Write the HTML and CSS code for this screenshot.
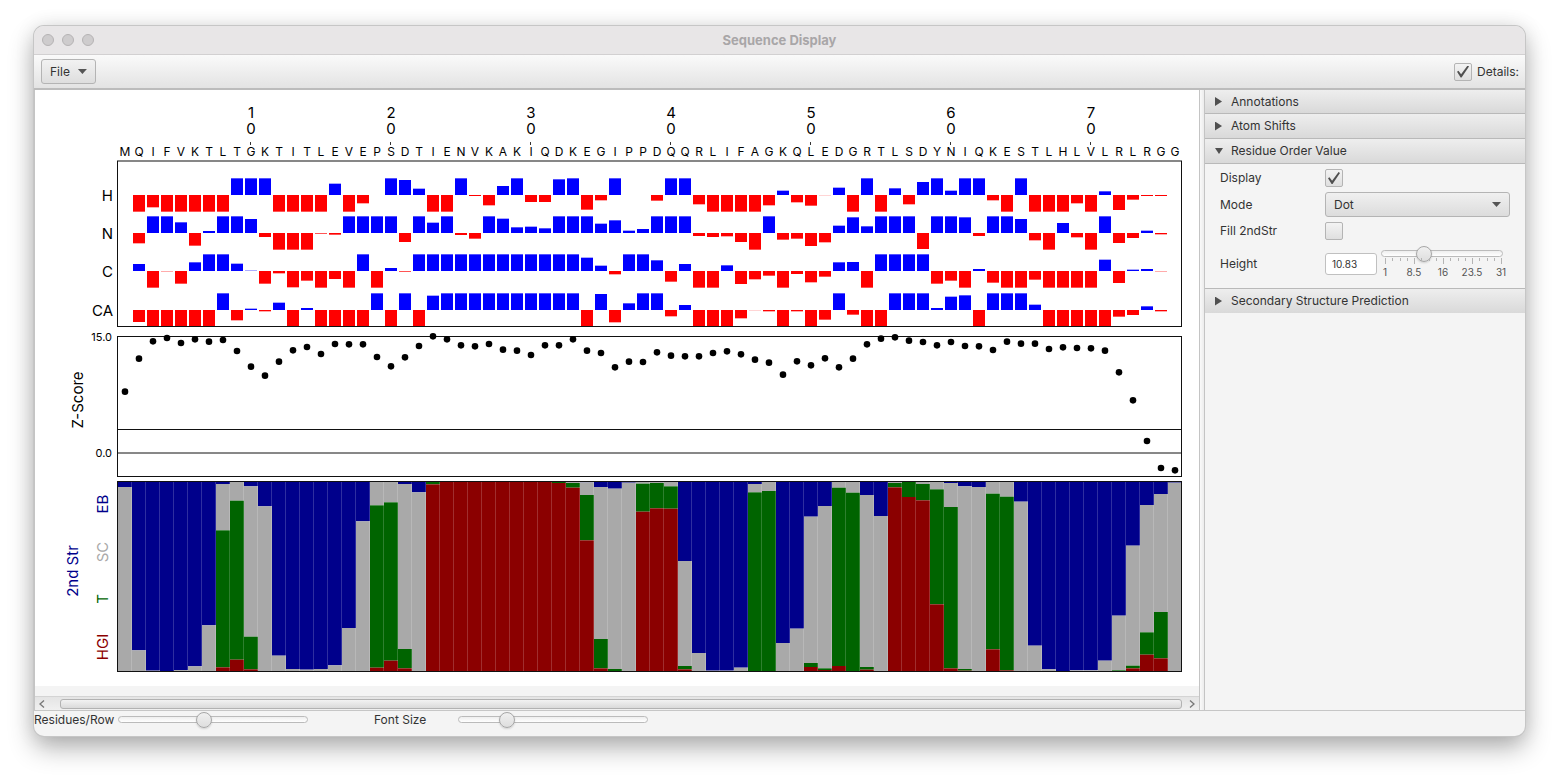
FILE: index.html
```html
<!DOCTYPE html>
<html lang="en">
<head>
<meta charset="utf-8">
<title>Sequence Display</title>
<link rel="stylesheet" href="styles.css">
</head>
<body>
<main class="window">
  <header class="titlebar">
    <div class="lights"><span class="light"></span><span class="light"></span><span class="light"></span></div>
    <h1 class="title">Sequence Display</h1>
  </header>
  <div class="toolbar">
    <button class="menu-button" type="button">File <span class="arrow-down"></span></button>
    <label class="details"><input class="check" type="checkbox" checked>Details:</label>
  </div>
  <div class="body">
    <section class="canvas-pane">
      <div class="viewport"><svg id="chart" class="chart" width="1160" height="596" role="img" aria-label="Sequence chart"></svg></div>
      <div class="scrollbar">
        <button class="scroll-button" type="button" aria-label="Scroll left"><svg width="8" height="10" viewBox="0 0 8 10"><path d="M6 1.500 2 5l4 3.500"/></svg></button>
        <div class="scroll-thumb"></div>
        <button class="scroll-button" type="button" aria-label="Scroll right"><svg width="8" height="10" viewBox="0 0 8 10"><path d="M2 1.500 6 5 2 8.500"/></svg></button>
      </div>
    </section>
    <div class="divider"></div>
    <aside class="side">
      <button class="pane-head" type="button"><span class="arrow-right"></span>Annotations</button>
      <button class="pane-head" type="button"><span class="arrow-right"></span>Atom Shifts</button>
      <button class="pane-head" type="button"><span class="arrow-open"></span>Residue Order Value</button>
      <div class="pane-body">
        <label for="display">Display</label>
        <input class="check" id="display" type="checkbox" checked>
        <label for="mode">Mode</label>
        <div class="combo">
          <select class="combo-select" id="mode"><option>Dot</option></select>
          <span class="arrow-down"></span>
        </div>
        <label for="fill">Fill 2ndStr</label>
        <input class="check" id="fill" type="checkbox">
        <label for="height">Height</label>
        <div class="height-row">
          <input class="field" id="height" type="text" value="10.83">
          <div class="scale">
            <input class="slider" type="range" min="1" max="31" step="any" value="10.83" aria-label="Height">
            <svg id="ticks" class="ticks" width="130" height="22"></svg>
          </div>
        </div>
      </div>
      <button class="pane-head" type="button"><span class="arrow-right"></span>Secondary Structure Prediction</button>
    </aside>
  </div>
  <footer class="footer">
    <label class="footer-label" for="perrow">Residues/Row</label>
    <input class="slider footer-slider" id="perrow" type="range" min="0" max="1000" value="447">
    <label class="footer-label second" for="fontsize">Font Size</label>
    <input class="slider footer-slider" id="fontsize" type="range" min="0" max="1000" value="232">
  </footer>
</main>
<script src="chart.js"></script>
</body>
</html>
```
FILE: styles.css
```css
* {
  box-sizing: border-box;
}

body {
  margin: 0;
  background: #fff;
  color: #333;
  font: 12px/16px Inter, "Liberation Sans", sans-serif;
}

button,
input,
select {
  margin: 0;
  color: inherit;
  font: inherit;
}

.window {
  display: flex;
  flex-direction: column;
  min-height: calc(100vh - 68px);
  margin: 26px 34px 42px;
  overflow: hidden;
  border-radius: 10px;
  background: #f4f4f4;
  box-shadow: 0 0 0 1px #c6c6c6, 0 12px 26px rgba(0, 0, 0, 0.3), 0 0 20px rgba(0, 0, 0, 0.1);
}

.titlebar {
  display: grid;
  grid-template-columns: 1fr auto 1fr;
  align-items: center;
  height: 29px;
  padding: 0 8px;
  border-bottom: 1px solid #d2d0d1;
  background: #e8e6e7;
}

.lights {
  display: flex;
  gap: 8px;
}

.light {
  width: 12px;
  height: 12px;
  border: 1px solid #b5b3b4;
  border-radius: 50%;
  background: #cecccd;
}

.title {
  margin: 0;
  color: #a9a6a8;
  font-size: 13px;
  font-weight: 700;
  line-height: 16px;
}

.toolbar {
  display: flex;
  align-items: center;
  justify-content: space-between;
  height: 35px;
  padding: 0 6px 0 7px;
  border-bottom: 2px solid #bcbcbc;
  background: linear-gradient(#fafafa, #e3e3e3);
}

.menu-button {
  display: flex;
  align-items: center;
  gap: 8px;
  height: 25px;
  padding: 0 8px;
  border: 1px solid #b4b4b4;
  border-radius: 3px;
  background: linear-gradient(#f2f2f2, #dedede);
}

.arrow-down {
  width: 9px;
  height: 5px;
  background: #555;
  clip-path: polygon(0 0, 100% 0, 50% 100%);
}

.details {
  display: flex;
  align-items: center;
  gap: 5px;
}

.check {
  display: grid;
  place-items: center;
  width: 18px;
  height: 18px;
  appearance: none;
  border: 1px solid #b4b4b4;
  border-radius: 2px;
  background: linear-gradient(#f3f3f3, #dfdfdf);
}

.check:checked::before {
  width: 12px;
  height: 12px;
  background: #505050;
  clip-path: polygon(0 52%, 12% 44%, 34% 72%, 88% 0, 100% 8%, 38% 100%, 30% 100%);
  content: "";
}

.body {
  display: flex;
  flex: 1;
  border-bottom: 1px solid #c6c6c6;
}

.canvas-pane {
  display: flex;
  flex: 1;
  flex-direction: column;
  min-width: 0;
  border-right: 1px solid #c4c4c4;
  border-left: 1px solid #c4c4c4;
}

.viewport {
  overflow: hidden;
  background: #fff;
}

.chart {
  display: block;
}

.letter {
  font-size: 12px;
}

.axis {
  font-size: 11px;
}

.number,
.atom,
.side-label,
.class-label {
  font-size: 15px;
}

.frame {
  fill: none;
  stroke: #111;
}

.scrollbar {
  display: flex;
  align-items: center;
  height: 14px;
  margin-top: auto;
  border-top: 1px solid #d4d4d4;
  background: linear-gradient(#e4e4e4, #f0f0f0);
}

.scroll-button {
  display: grid;
  flex: none;
  place-items: center;
  width: 14px;
  height: 12px;
  padding: 0;
  border: 0;
  background: none;
}

.scroll-button:first-child {
  margin-right: 11px;
}

.scroll-button path {
  fill: none;
  stroke: #777;
  stroke-width: 1.3;
}

.scroll-thumb {
  flex: 1;
  height: 10px;
  margin-right: 3px;
  border: 1px solid #b2b2b2;
  border-radius: 3px;
  background: linear-gradient(#f2f2f2, #dadada);
}

.divider {
  width: 5px;
  border-right: 1px solid #c4c4c4;
  background: linear-gradient(90deg, #fafafa, #ececec);
}

.side {
  flex: none;
  width: 320px;
}

.pane-head {
  display: flex;
  align-items: center;
  gap: 8px;
  width: 100%;
  height: 25px;
  padding: 0 10px;
  border: 0;
  border-bottom: 1px solid #b9b9b9;
  background: linear-gradient(#eee, #d9d9d9);
  text-align: left;
}

.pane-head:first-child {
  height: 24px;
}

.pane-head:last-child {
  border-top: 1px solid #b9b9b9;
  border-bottom: 0;
}

.arrow-right,
.arrow-open {
  width: 8px;
  height: 9px;
  background: #505050;
  clip-path: polygon(0 0, 88% 50%, 0 100%);
}

.arrow-open {
  height: 6px;
  clip-path: polygon(0 0, 100% 0, 50% 100%);
}

.pane-body {
  display: grid;
  grid-template-columns: 100px 1fr;
  align-items: center;
  gap: 5px;
  padding: 5px 15px;
}

.combo {
  display: grid;
  align-items: center;
}

.combo > * {
  grid-area: 1 / 1;
}

.combo-select {
  height: 25px;
  padding: 0 8px;
  appearance: none;
  border: 1px solid #b4b4b4;
  border-radius: 3px;
  background: linear-gradient(#f0f0f0, #dcdcdc);
}

.combo .arrow-down {
  justify-self: end;
  margin-right: 9px;
  pointer-events: none;
}

.height-row {
  display: flex;
  gap: 4px;
  align-items: center;
  height: 38px;
}

.field {
  flex: none;
  width: 52px;
  height: 22px;
  padding: 0 6px;
  border: 1px solid #c0c0c0;
  border-radius: 3px;
  background: #fff;
  font-size: 10px;
}

.scale {
  display: flex;
  flex-direction: column;
  width: 122px;
  height: 38px;
}

.slider {
  flex: none;
  width: 100%;
  height: 16px;
  appearance: none;
  background: none;
}

.slider::-webkit-slider-runnable-track {
  height: 7px;
  border: 1px solid #bbb;
  border-radius: 4px;
  background: linear-gradient(#eee, #fff);
}

.slider::-webkit-slider-thumb {
  width: 16px;
  height: 16px;
  margin-top: -5px;
  appearance: none;
  border: 1px solid #a6a6a6;
  border-radius: 50%;
  background: linear-gradient(#f0f0f0, #dedede);
  box-shadow: 0 1px 2px rgba(0, 0, 0, 0.15);
}

.ticks {
  overflow: visible;
  fill: #555;
  font-size: 10px;
}

.footer {
  display: flex;
  height: 25px;
}

.footer-label {
  width: 84px;
  padding-top: 1px;
}

.footer-label.second {
  margin-left: 66px;
}

.footer-slider {
  width: 190px;
}
```
FILE: chart.js
```js
const NS = "http://www.w3.org/2000/svg";

function add(parent, name, attrs, text) {
  const node = document.createElementNS(NS, name);
  for (const key in attrs) node.setAttribute(key, attrs[key]);
  if (text !== undefined) node.textContent = text;
  parent.appendChild(node);
  return node;
}

const sequence = "MQIFVKTLTGKTITLEVEPSDTIENVKAKIQDKEGIPPDQQRLIFAGKQLEDGRTLSDYNIQKESTLHLVLRLRGG";
const cell = 14;
const left = 83;
const width = sequence.length * cell;
const chart = document.getElementById("chart");

// Residue letters and position numbers
[...sequence].forEach((letter, i) => {
  const x = left + i * cell + 7;
  add(chart, "text", { class: "letter", x, y: 66, "text-anchor": "middle" }, letter);
  if ((i + 1) % 10 === 0) {
    const number = add(chart, "text", { class: "number", "text-anchor": "middle" });
    add(number, "tspan", { x, y: 28 }, (i + 1) / 10);
    add(number, "tspan", { x, y: 44 }, "0");
    add(chart, "rect", { x: x - 1, y: 52, width: 1, height: 3, fill: "#333" });
  }
});

// Shift deviations, 50 is the clipping limit
const shifts = [
  ["H", 105, [0, -50, -37, -50, -50, -50, -50, -50, 50, 50, 50, -50, -50, -50, -50, 34, -50, -25, 0, 50, 45, 19, -50, -50, 50, -3, -31, 27, 50, -21, -21, 47, 50, -44, -16, 50, 0, 0, -17, 50, 50, -28, -50, -50, -50, -50, -31, 13, -22, -32, -0.5, 22, -50, 50, -50, 20, -28, 39, 50, 13, 50, 50, -16, -50, 50, -50, -50, -50, -25, -50, 11, -45, -14, -3, -3, 0]],
  ["N", 143, [0, -31, 50, 50, 32, -38, 6, 50, 50, 42, -12, -50, -50, -50, -2, -5, 50, 50, 50, 50, -27, 50, 31, 50, -6, -17, 50, 43, 17, 19, 14, 50, 50, 50, 28, 38, 7, 12, 50, 50, 50, -9, -12, -10, -27, -50, 50, -20, -17, -39, -28, 22, 47, 20, 50, 50, 50, -48, 50, 50, 47, -9, 50, 50, 42, -22, -50, 30, -13, -50, 50, -30, -15, 7, -4, 0]],
  ["C", 181, [0, 21, -50, -1, -38, 26, 50, 50, 22, 1, -38, -7, -49, -29, -50, -24, -50, 50, -50, 9, -2, 50, 50, 50, 50, 50, 50, 50, 50, 50, 50, 50, 50, 40, 16, -10, 50, 50, 32, -32, 21, -50, -50, 17, -39, -25, -14, -50, -9, -34, -17, 26, 27, -50, 50, 50, 50, 50, -38, -29, -50, 6, -35, -50, -50, -26, -50, -50, -50, -50, 34, -36, 4, 6, -1, 0]],
  ["CA", 220, [0, -36, -50, -50, -50, -50, -50, 50, -31, 4, -4, 22, -50, 6, -50, -50, -50, -50, 50, -50, 50, -50, 43, 50, 50, 50, 50, 50, 50, 50, 50, 50, 50, -50, 48, -37, 20, 50, 50, -19, 15, -50, -50, -50, -25, -0.5, -4, -50, -4, -50, -29, 50, -14, -50, -50, 50, 50, 50, 6, 40, 44, -50, 50, 50, 50, 16, -50, -50, -50, -50, -50, -20, -15, 11, -4, 0]]
];

shifts.forEach(([name, base, values]) => {
  add(chart, "text", { class: "atom", x: 78, y: base + 6, "text-anchor": "end" }, name);
  values.forEach((value, i) => {
    const height = Math.abs(value) / 3;
    add(chart, "rect", {
      x: left + i * cell + 1,
      y: value > 0 ? base - height : base,
      width: 12,
      height,
      fill: value > 0 ? "#00f" : "#f00"
    });
  });
});
add(chart, "rect", { class: "frame", x: left - 0.5, y: 71, width, height: 165.5 });

// Z-scores, stored as distance below the panel's upper edge in thirds
const scores = [200, 101, 49, 39, 54, 43, 50, 45, 78, 125, 152, 110, 76, 66, 87, 57, 58, 58, 96, 124, 97, 63, 34, 43, 61, 64, 57, 74, 77, 90, 61, 61, 43, 77, 84, 127, 110, 111, 82, 92, 94, 94, 84, 79, 88, 104, 113, 149, 109, 121, 100, 127, 101, 58, 41, 37, 47, 51, 61, 51, 63, 64, 75, 50, 56, 56, 72, 67, 69, 70, 77, 142, 226, 348, 429, 436];

add(chart, "rect", { class: "frame", x: left - 0.5, y: 246.5, width, height: 140 });
add(chart, "path", { class: "frame", d: `M${left} 339.500h${width}M${left} 363h${width}` });
scores.forEach((score, i) => {
  add(chart, "circle", { cx: left + i * cell + 7, cy: 235 + score / 3, r: 3.3 });
});
add(chart, "text", { class: "axis", x: 77, y: 251, "text-anchor": "end" }, "15.0");
add(chart, "text", { class: "axis", x: 77, y: 367, "text-anchor": "end" }, "0.0");

// Secondary structure: lower edges of the EB, SC and T bands, 21 is top and 588 bottom
const bands = [[36], [526], [587], [588], [585], [574], [451], [27, 166, 577], [21, 77, 554], [34, 485, 583], [94], [542], [582], [584], [582], [571], [459], [139], [21, 91, 578], [21, 82, 557], [27, 522, 580], [52], [21, 21, 28], [21, 21, 21], [21, 21, 21], [21, 21, 21], [21, 21, 21], [21, 21, 21], [21, 21, 21], [21, 21, 21], [21, 21, 21], [21, 21, 24], [21, 24, 38], [22, 60, 196], [36, 492, 580], [41, 582], [23], [21, 26, 110], [21, 24, 100], [21, 34, 101], [258, 573, 583], [534], [587], [587], [578], [27, 52, 588], [21, 48, 588], [504], [461], [125, 564, 576], [93, 580, 585], [21, 38, 573], [21, 53, 588], [60, 576, 584], [123], [21, 24, 37], [21, 21, 66], [21, 27, 76], [21, 43, 388], [24, 96, 580], [34, 582, 587], [36], [21, 56, 523], [21, 65, 586], [80], [512], [583], [588], [586], [586], [557], [422, 586], [212, 572, 580], [90, 472, 539], [57, 411, 550], [23]];
const colors = ["#00008b", "#a9a9a9", "#006400", "#8b0000"];

bands.forEach(([eb, sc = 588, t = 588], i) => {
  const edges = [21, eb, sc, t, 588];
  const x = left + i * cell;
  colors.forEach((fill, k) => {
    const height = (edges[k + 1] - edges[k]) / 3;
    if (height > 0) add(chart, "rect", { x, y: 385 + edges[k] / 3, width: cell, height, fill });
  });
  add(chart, "rect", { x: x + cell - 1, y: 392, width: 1, height: 189, fill: "#fff", opacity: 0.18 });
});
add(chart, "rect", { class: "frame", x: left - 0.5, y: 391.5, width, height: 190 });

[
  ["side-label", "Z-Score", 48, 310, "#000"],
  ["side-label", "2nd Str", 43, 481, colors[0]],
  ["class-label", "EB", 73, 414, colors[0]],
  ["class-label", "SC", 73, 462, colors[1]],
  ["class-label", "T", 73, 509, colors[2]],
  ["class-label", "HGI", 73, 557, colors[3]]
].forEach(([cls, label, x, y, fill]) => {
  add(chart, "text", { class: cls, fill, "text-anchor": "middle", transform: `translate(${x} ${y}) rotate(-90)` }, label);
});

// Height slider scale
const ticks = document.getElementById("ticks");
["1", "8.5", "16", "23.5", "31"].forEach((label, i) => {
  const x = 4 + i * 29;
  add(ticks, "text", { x, y: 15, "text-anchor": "middle" }, label);
  for (let k = 0; k < (i < 4 ? 4 : 1); k++) {
    add(ticks, "rect", { x: x + Math.round(k * 7.25), y: -3, width: 1, height: k ? 3 : 6, fill: "#b4b4b4" });
  }
});
```
